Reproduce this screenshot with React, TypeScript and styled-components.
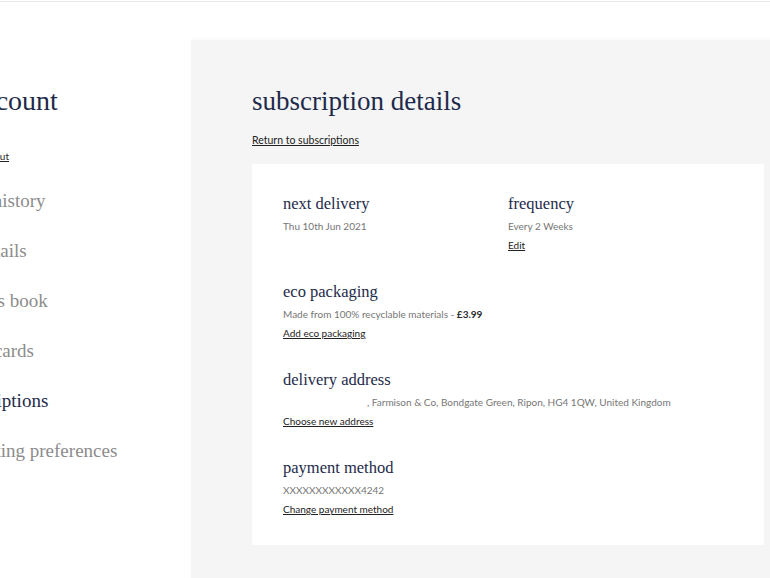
import styled, { createGlobalStyle } from 'styled-components';

const GlobalStyle = createGlobalStyle`
  html, body {
    margin: 0;
    padding: 0;
    background: #ffffff;
    overflow: hidden;
  }
  body {
    font-family: Lato, "Open Sans", sans-serif;
  }
`;

const serif = `"Liberation Serif", "DejaVu Serif", serif`;

const TopBar = styled.div`
  height: 1px;
  border-bottom: 1px solid #e9e9e9;
`;

const Layout = styled.div`
  display: flex;
  width: 825px;
  margin-top: 38px;
`;

const Sidebar = styled.aside`
  width: 191px;
  flex-shrink: 0;
  overflow: hidden;
`;

const SideInner = styled.div`
  margin-left: -52px;
  padding-top: 44px;
  display: flex;
  flex-direction: column;
  align-items: flex-start;
`;

const SideTitle = styled.h1`
  margin: 0 0 0 -20px;
  font-family: ${serif};
  font-weight: 400;
  font-size: 28px;
  line-height: 34px;
  color: #1e2a4a;
  white-space: nowrap;
`;

const LogOut = styled.a`
  margin: 31px 0 0 28px;
  font-size: 10px;
  line-height: 14px;
  color: #222;
  text-decoration: underline;
`;

const NavList = styled.ul`
  list-style: none;
  margin: 26px 0 0;
  padding: 0;
  display: flex;
  flex-direction: column;
  gap: 26px;
`;

const NavItem = styled.li<{ active?: boolean }>`
  font-family: ${serif};
  font-size: 19px;
  line-height: 24px;
  white-space: nowrap;
  color: ${(p) => (p.active ? '#1e2a4a' : '#8c8c8c')};
`;

const Main = styled.main`
  flex: 1;
  background: #f5f5f5;
  box-shadow: 0 -2px 5px rgba(0, 0, 0, 0.025);
  padding: 44px 61px 40px;
  min-height: 560px;
`;

const PageTitle = styled.h2`
  margin: 0;
  font-family: ${serif};
  font-weight: 400;
  font-size: 27px;
  line-height: 34px;
  color: #1e2a4a;
`;

const BackLink = styled.a`
  display: inline-block;
  margin-top: 14px;
  font-size: 10.5px;
  line-height: 16px;
  color: #222;
  text-decoration: underline;
`;

const Card = styled.section`
  margin-top: 16px;
  background: #ffffff;
  padding: 30px 31px 28px;
  display: flex;
  flex-direction: column;
  gap: 29px;
`;

const Row = styled.div`
  display: grid;
  grid-template-columns: 1fr 1fr;
`;

const Block = styled.div`
  display: flex;
  flex-direction: column;
  align-items: flex-start;
`;

const BlockTitle = styled.h3`
  margin: 0 0 4px;
  font-family: ${serif};
  font-weight: 400;
  font-size: 16.5px;
  line-height: 20px;
  color: #1e2a4a;
`;

const BlockText = styled.p`
  margin: 0;
  font-size: 10px;
  line-height: 16px;
  color: #767676;
  white-space: nowrap;
`;

const Price = styled.span`
  color: #2a2a2a;
  font-weight: 700;
`;

const NameGap = styled.span`
  display: inline-block;
  width: 84px;
`;

const ActionLink = styled.a`
  margin-top: 3px;
  font-size: 10px;
  line-height: 16px;
  color: #222;
  text-decoration: underline;
`;

const navItems = [
  'order history',
  'my details',
  'address book',
  'e-gift cards',
  'subscriptions',
  'marketing preferences',
];

export default function App() {
  return (
    <>
      <GlobalStyle />
      <TopBar />
      <Layout>
        <Sidebar>
          <SideInner>
            <SideTitle>my account</SideTitle>
            <LogOut>Log out</LogOut>
            <NavList>
              {navItems.map((item) => (
                <NavItem key={item} active={item === 'subscriptions'}>
                  {item}
                </NavItem>
              ))}
            </NavList>
          </SideInner>
        </Sidebar>
        <Main>
          <PageTitle>subscription details</PageTitle>
          <BackLink>Return to subscriptions</BackLink>
          <Card>
            <Row>
              <Block>
                <BlockTitle>next delivery</BlockTitle>
                <BlockText>Thu 10th Jun 2021</BlockText>
              </Block>
              <Block>
                <BlockTitle>frequency</BlockTitle>
                <BlockText>Every 2 Weeks</BlockText>
                <ActionLink>Edit</ActionLink>
              </Block>
            </Row>
            <Block>
              <BlockTitle>eco packaging</BlockTitle>
              <BlockText>
                Made from 100% recyclable materials - <Price>£3.99</Price>
              </BlockText>
              <ActionLink>Add eco packaging</ActionLink>
            </Block>
            <Block>
              <BlockTitle>delivery address</BlockTitle>
              <BlockText>
                <NameGap />, Farmison &amp; Co, Bondgate Green, Ripon, HG4 1QW, United Kingdom
              </BlockText>
              <ActionLink>Choose new address</ActionLink>
            </Block>
            <Block>
              <BlockTitle>payment method</BlockTitle>
              <BlockText>XXXXXXXXXXXX4242</BlockText>
              <ActionLink>Change payment method</ActionLink>
            </Block>
          </Card>
        </Main>
      </Layout>
    </>
  );
}
